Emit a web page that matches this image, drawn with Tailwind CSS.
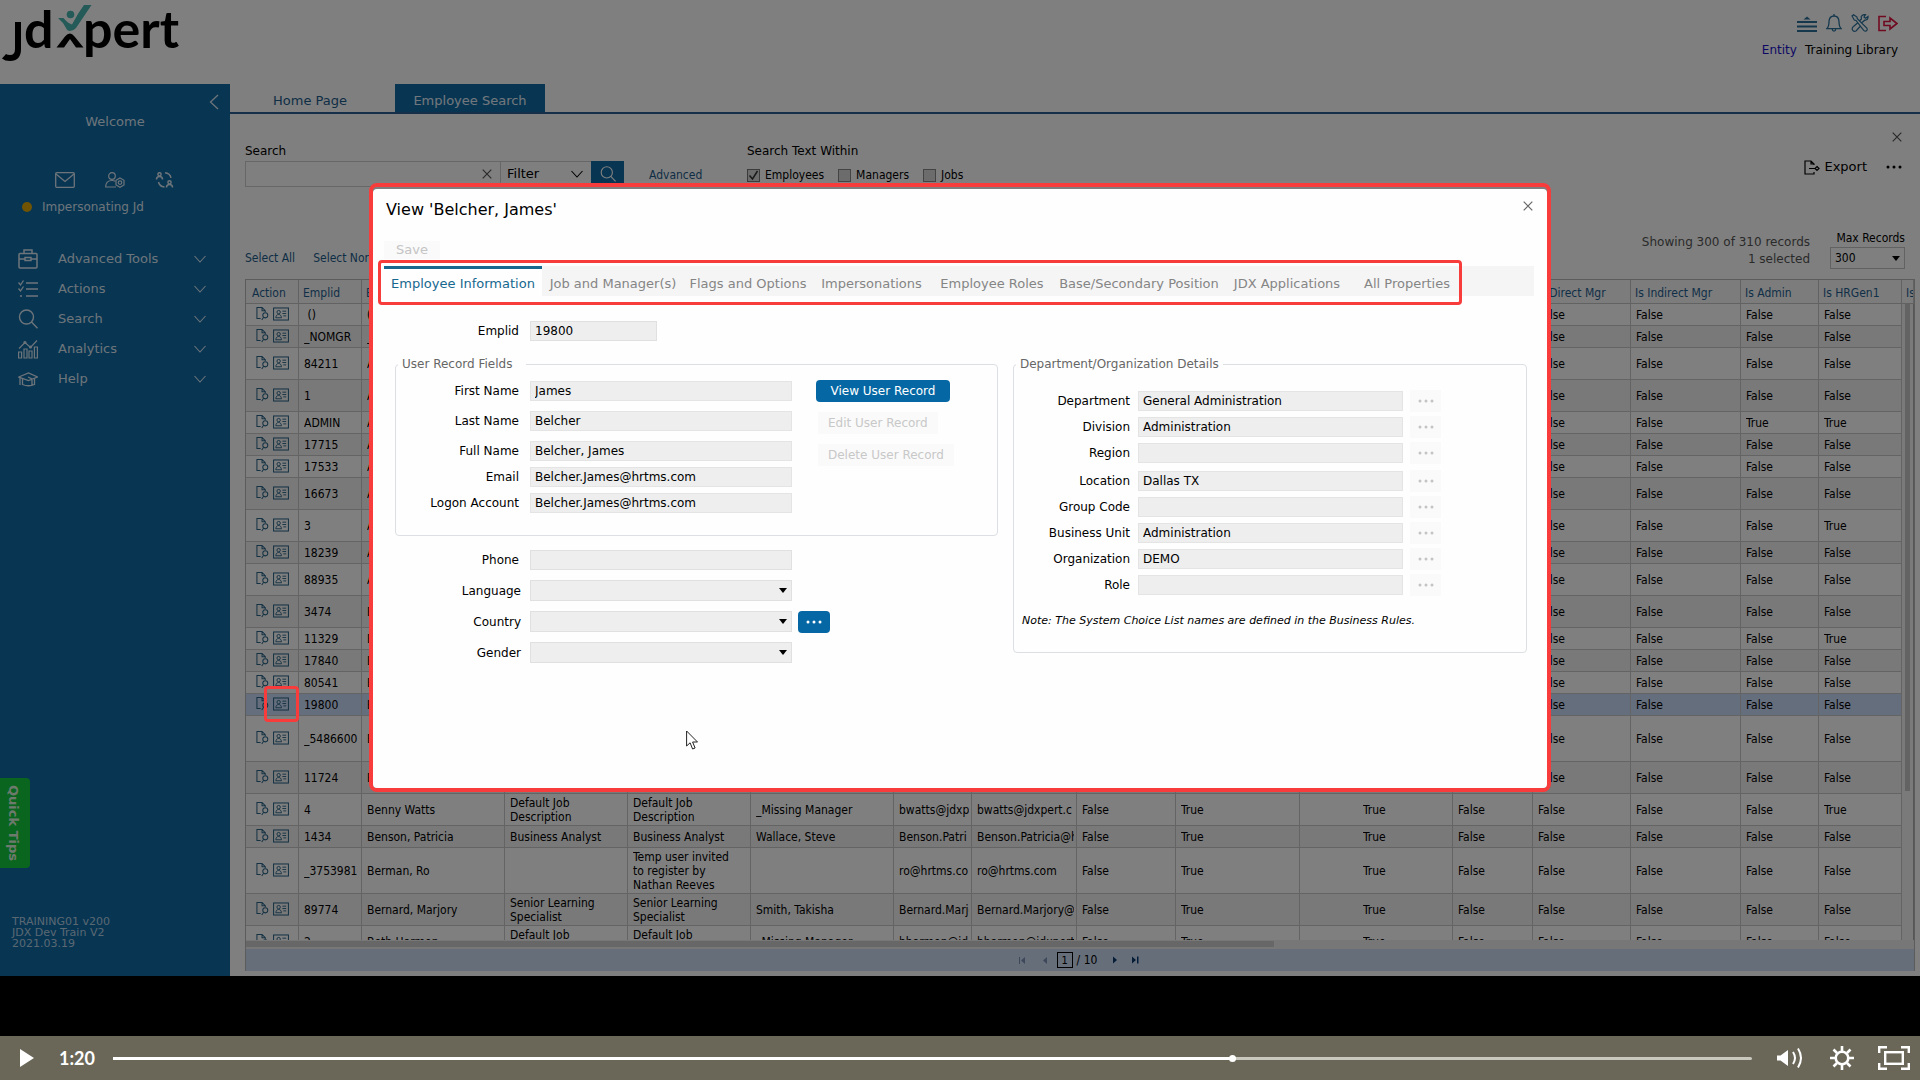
<!DOCTYPE html>
<html lang="en">
<head>
<meta charset="utf-8">
<title>JDXpert - Employee Search</title>
<script src="https://cdn.jsdelivr.net/npm/@tailwindcss/browser@4"></script>
</head>
<body class="flex h-screen flex-col overflow-hidden bg-black font-['DejaVu_Sans',Verdana,sans-serif] text-xs text-black">

<!-- Shared icon symbols -->
<svg class="hidden" aria-hidden="true">
  <symbol id="chev" viewBox="0 0 12 8"><path d="M.5 1 6 7l5.500-6" fill="none" stroke="currentColor" stroke-width="1.100"/></symbol>
  <symbol id="cross" viewBox="0 0 10 10"><path d="m.7.7 8.600 8.600M9.300.7.7 9.300" fill="none" stroke="currentColor" stroke-width="1.200"/></symbol>
  <symbol id="lens" viewBox="0 0 20 20"><g fill="none" stroke="currentColor" stroke-width="1.400"><circle cx="8.500" cy="8" r="7"/><path d="m13.500 13 6 6.300"/></g></symbol>
  <symbol id="doc" viewBox="0 0 14 15"><g fill="none" stroke="currentColor" stroke-width="1.100"><path d="M5 13H1V1h5.500l3.500 3.500V6M6.500 1v3.500H10"/><circle cx="10" cy="9.500" r="2.700"/><path d="m8.200 11.500-2 3"/></g></symbol>
  <symbol id="card" viewBox="0 0 17 14"><g fill="none" stroke="currentColor"><rect x=".6" y=".6" width="15.800" height="12.800" stroke-width="1.100"/><circle cx="6" cy="5" r="1.800"/><path d="M3 11c.2-2.300 1.200-3.500 3-3.500S8.800 8.700 9 11zM10 4h4M10 6.500h4M11 9h3"/></g></symbol>
  <symbol id="dots" viewBox="0 0 18 4"><g fill="currentColor"><circle cx="3" cy="2" r="1.500"/><circle cx="9" cy="2" r="1.500"/><circle cx="15" cy="2" r="1.500"/></g></symbol>
  <symbol id="tri" viewBox="0 0 8 5"><path d="M0 0h8L4 5z" fill="currentColor"/></symbol>
</svg>

<main class="relative flex min-h-0 flex-1 flex-col overflow-hidden bg-white">
  <header class="flex h-[84px] shrink-0 justify-between">
    <svg class="h-16 w-48" viewBox="0 0 192 64" role="img" aria-label="jdxpert">
      <g font-family="Lato, sans-serif" font-weight="700" font-size="52" fill="#000">
        <text x="24" y="47.500">d</text><text x="83" y="47.500">pert</text>
      </g>
      <path d="M18 22v27q0 9-8 9-4 0-6-1.800" stroke="#000" stroke-width="6" fill="none"/>
      <path d="m56.500 47.500 8.500-11q5-6 9.500 0l9 11h-7.500L70 39l-6 8.500z" fill="#000"/>
      <path d="M58 18h5.500q4 5 8.500 6.500Q78 13 84 5h7.500L76 28q-2.500 3-6 3-3 0-4-3Q63 22 58 18z" fill="#48b4b0"/><circle cx="70.500" cy="14.500" r="3.800" fill="#48b4b0"/>
    </svg>
    <div class="flex flex-col items-end gap-2 pt-[14px] pr-[22px]">
      <div class="flex items-center gap-[9px] text-[#2a7099]">
        <svg class="h-[18px] w-5" viewBox="0 0 20 18"><path d="M0 8h20M0 12.500h20M0 17h20" stroke="currentColor" stroke-width="1.800"/><path d="m6.500 5.500 3.500-3 3.500 3z" fill="currentColor"/></svg>
        <svg class="h-[18px] w-4" viewBox="0 0 16 18" fill="none" stroke="currentColor" stroke-width="1.300"><path d="M.7 14.700Q3 13 3 7.500 3.300 2 8 2t5 5.500q0 5.500 2.300 7.200zM8 0v2M6.200 15q.3 2.200 1.800 2.200T9.800 15"/></svg>
        <svg class="h-[18px] w-[18px]" viewBox="0 0 18 18" fill="none" stroke="currentColor" stroke-width="1.200"><path d="m1 2 1.500-1.300L6 3l.3 1.700 9.500 9.300q1 2-.5 3-1.500.4-2.600-.7L5 6.500 3.300 6zM11 8.500l3-2.500q2.500.3 3-2.200V2.500l-2.300 1.800L13 3l1.500-2.300q-3-.6-4.300 1.800l.2 2.500-2 2M6.500 9l-4 3.500Q.5 14 1.500 16t3.500 1l4.500-5"/></svg>
        <svg class="h-[18px] w-5 text-[#e01440]" viewBox="0 0 20 18" fill="none" stroke="currentColor" stroke-width="1.600"><path d="M8 2.500H1v14h7M6 7.500h6V4l7 5.500-7 5.500v-3.500H6z"/></svg>
      </div>
      <div class="flex gap-2 text-xs leading-5"><a href="#" class="text-[#1a10c8]">Entity</a><span>Training Library</span></div>
    </div>
  </header>

  <div class="flex min-h-0 flex-1">
    <!-- Side navigation -->
    <aside class="flex w-[230px] shrink-0 flex-col bg-[#0f6aa4] text-[13px] text-[#dbe9f5]">
      <button aria-label="Collapse" class="mt-[10px] mr-[11px] self-end"><svg class="h-4 w-[10px]" viewBox="0 0 10 16"><path d="M9 1 1.500 8 9 15" fill="none" stroke="currentColor" stroke-width="1.300"/></svg></button>
      <p class="mt-px text-center leading-[22px]">Welcome</p>
      <div class="mt-[39px] flex justify-center gap-[30px]">
        <svg class="h-4 w-5" viewBox="0 0 20 16" fill="none" stroke="currentColor" stroke-width="1.300"><rect x=".7" y=".7" width="18.600" height="14.600" rx="1"/><path d="m1 2 9 7.500L19 2"/></svg>
        <svg class="h-4 w-5" viewBox="0 0 20 16" fill="none" stroke="currentColor" stroke-width="1.200"><circle cx="7" cy="4" r="3.300"/><path d="M11 15H.7q0-6.500 6.300-6.500 2 0 3.300.7"/><path d="m15 6 4 2.300v4.700l-4 2.300-4-2.300V8.300z"/><circle cx="15" cy="10.600" r="1.800"/></svg>
        <svg class="h-4 w-5" viewBox="0 0 20 16" fill="none" stroke="currentColor" stroke-width="1.500"><circle cx="4.500" cy="2.300" r="1.600"/><path d="M1.500 7.500q0-3 3-3t3 3M10 .8q5 .5 6 5M9.500 15q-5-.5-6-5"/><circle cx="14.500" cy="10.300" r="1.600"/><path d="M11.500 15.500q0-3 3-3t3 3"/></svg>
      </div>
      <p class="mt-[10px] flex items-center gap-[10px] pl-[22px] text-xs leading-[18px]"><span class="h-[10px] w-[10px] rounded-full bg-[#e0a808]"></span>Impersonating Jd</p>
      <nav class="mt-7 flex flex-col pr-6 pl-[18px]">
        <a href="#" class="flex h-[30px] items-center gap-5"><svg class="h-5 w-5" viewBox="0 0 20 20" fill="none" stroke="currentColor" stroke-width="1.500"><rect x="1" y="4.500" width="18" height="14.500" rx="1"/><path d="M6 4V1h8v3M1 10h6m6 0h6M7 8.500h6v3H7z"/></svg><span class="flex-1">Advanced Tools</span><svg class="h-2 w-3"><use href="#chev"/></svg></a>
        <a href="#" class="flex h-[30px] items-center gap-5"><svg class="h-5 w-5" viewBox="0 0 20 20" fill="none" stroke="currentColor" stroke-width="1.300"><path d="M8 4h12M8 10h12M8 17h12M.5 3.500 2.500 6 5.500 1.500M.5 9.500 2.500 12l3-4.500M2 17h2"/></svg><span class="flex-1">Actions</span><svg class="h-2 w-3"><use href="#chev"/></svg></a>
        <a href="#" class="flex h-[30px] items-center gap-5"><svg class="h-5 w-5"><use href="#lens"/></svg><span class="flex-1">Search</span><svg class="h-2 w-3"><use href="#chev"/></svg></a>
        <a href="#" class="flex h-[30px] items-center gap-5"><svg class="h-5 w-5" viewBox="0 0 20 20" fill="none" stroke="currentColor" stroke-width="1.200"><path d="M.6 19v-6h3v6zM6 19v-9h3v9zM11 19v-7h3v7zM16.400 19V8h3v11zM1 9.500l6-6 5.500 5L19 1.500"/><circle cx="7" cy="3.500" r="1"/><circle cx="12.500" cy="8" r="1"/></svg><span class="flex-1">Analytics</span><svg class="h-2 w-3"><use href="#chev"/></svg></a>
        <a href="#" class="flex h-[30px] items-center gap-5"><svg class="h-5 w-5" viewBox="0 0 20 20" fill="none" stroke="currentColor" stroke-width="1.300"><path d="m.8 8 9.700-4L19.500 8l-9 3.500zM4.500 10v5.500q6 2.500 12 0V10M2 9v7M10 8l4 2v6"/></svg><span class="flex-1">Help</span><svg class="h-2 w-3"><use href="#chev"/></svg></a>
      </nav>
      <p class="mt-auto pb-[27px] pl-3 text-[11px] leading-[11px] text-[#b4d0e4]">TRAINING01 v200<br>JDX Dev Train V2<br>2021.03.19</p>
    </aside>

    <section class="flex min-w-0 flex-1 flex-col">
      <div class="flex h-[30px] shrink-0 items-end border-b-2 border-[#2a5f96] text-[13px]" role="tablist">
        <button role="tab" class="h-[26px] w-[160px] pt-1 text-[#1d5c8c]">Home Page</button>
        <button role="tab" aria-selected="true" class="ml-[5px] h-[28px] w-[150px] bg-[#0f6aa4] pt-[6px] text-[#e4effa]">Employee Search</button>
      </div>

      <div class="flex justify-between pt-[28px] pr-[15px] pl-[15px]">
        <div class="flex">
          <div class="flex flex-col">
            <label for="q" class="h-[19px] leading-[18px]">Search</label>
            <div class="flex h-[26px]">
              <div class="flex w-[256px] items-center border border-[#cfcfcf] pr-2"><input id="q" type="text" class="min-w-0 flex-1 outline-none"><svg class="h-[10px] w-[10px] text-[#555]"><use href="#cross"/></svg></div>
              <div class="relative"><select aria-label="Filter" class="h-[26px] w-[90px] appearance-none border-y border-[#cfcfcf] pl-[6px] text-[13px]"><option>Filter</option></select><svg class="pointer-events-none absolute top-[9px] right-2 h-2 w-3"><use href="#chev"/></svg></div>
              <button aria-label="Run search" class="flex w-[33px] items-center justify-center bg-[#0f6aa4] text-white"><svg class="h-4 w-4"><use href="#lens"/></svg></button>
              <a href="#" class="ml-[25px] w-14 self-center pt-[2px] font-['DejaVu_Sans_Condensed','DejaVu_Sans',sans-serif] text-[#1d5c8c]">Advanced</a>
            </div>
          </div>
          <fieldset class="ml-[42px] font-['DejaVu_Sans_Condensed','DejaVu_Sans',sans-serif]">
            <legend class="h-[19px] font-['DejaVu_Sans',sans-serif] leading-[18px]">Search Text Within</legend>
            <div class="flex h-[26px] items-center gap-[14px] pt-[2px]">
              <label class="flex items-center gap-[5px]"><span class="relative h-[13px] w-[13px]"><input type="checkbox" checked class="block h-[13px] w-[13px] appearance-none border border-[#777] bg-[#d8d8d8]"><svg class="pointer-events-none absolute inset-0 h-[13px] w-[13px]" viewBox="0 0 13 13"><path d="m2.500 6.500 3 3.500 5-8" fill="none" stroke="#333" stroke-width="1.500"/></svg></span>Employees</label>
              <label class="flex items-center gap-[5px]"><input type="checkbox" class="h-[13px] w-[13px] appearance-none border border-[#888] bg-[#d8d8d8]">Managers</label>
              <label class="flex items-center gap-[5px]"><input type="checkbox" class="h-[13px] w-[13px] appearance-none border border-[#888] bg-[#d8d8d8]">Jobs</label>
            </div>
          </fieldset>
        </div>
        <div class="-mt-[10px] flex flex-col items-end gap-[15px]">
          <button aria-label="Close page" class="mr-[3px]"><svg class="h-[10px] w-[10px] text-[#555]"><use href="#cross"/></svg></button>
          <div class="flex items-center gap-[18px] pr-[2px]">
            <button class="flex items-center gap-1 text-[13px] leading-5"><svg class="h-[15px] w-4" viewBox="0 0 16 15" fill="none" stroke="currentColor" stroke-width="1.200"><path d="M10 5V4L7 1H1v13h9v-2M7 1v3h3M5 8.500h6M13 6.500l2 2-2 2-2-2z"/></svg>Export</button>
            <button aria-label="More"><svg class="h-1 w-[18px]"><use href="#dots"/></svg></button>
          </div>
        </div>
      </div>

      <div class="mt-[43px] flex h-[49px] shrink-0 justify-between pr-[15px] pl-[15px]">
        <div class="flex gap-[18px] pt-[18px] font-['DejaVu_Sans_Condensed','DejaVu_Sans',sans-serif] leading-5 text-[#1d5c8c]"><a href="#">Select All</a><a href="#">Select None</a></div>
        <div class="flex gap-5">
          <p class="pt-1 text-right leading-[17px] text-[#555]">Showing 300 of 310 records<br>1 selected</p>
          <div class="relative w-[75px] font-['DejaVu_Sans_Condensed','DejaVu_Sans',sans-serif]">
            <label for="max" class="block h-[17px] text-right leading-[17px] whitespace-nowrap">Max Records</label>
            <select id="max" class="h-[22px] w-[75px] appearance-none border border-[#c4c4c4] pl-1"><option>300</option></select>
            <svg class="pointer-events-none absolute top-[26px] right-[5px] h-[5px] w-2"><use href="#tri"/></svg>
          </div>
        </div>
      </div>

      <div class="relative mr-[5px] ml-[15px] min-h-0 flex-1 overflow-hidden border border-b-0 border-[#b8b8b8] font-['DejaVu_Sans_Condensed','DejaVu_Sans',Tahoma,sans-serif]">
        <table class="w-full table-fixed border-separate border-spacing-0 text-xs leading-[14px]">
          <colgroup>
            <col class="w-[53px]"><col class="w-[63px]"><col class="w-[143px]"><col class="w-[123px]"><col class="w-[123px]"><col class="w-[143px]"><col class="w-[78px]"><col class="w-[105px]"><col class="w-[99px]"><col class="w-[124px]"><col class="w-[153px]"><col class="w-[80px]"><col class="w-[98px]"><col class="w-[110px]"><col class="w-[78px]"><col class="w-[83px]"><col>
          </colgroup>
          <thead class="bg-[#f8f8f8] text-left text-[#1f5f90]"><tr id="head" class="h-[24px]"></tr></thead>
          <tbody id="rows"></tbody>
        </table>
        <div class="absolute top-[24px] right-0 bottom-0 w-3 border-r border-[#aaa] bg-[#f4f4f4] px-[3px]"><div class="h-[487px] bg-[#c6c6c6]"></div></div>
      </div>
      <div class="mr-[5px] mb-[5px] ml-[15px] shrink-0 border-x border-[#b8b8b8]">
        <div class="h-[9px] bg-[#eee] pt-px"><div class="h-[6px] w-[1028px] max-w-full bg-[#cfcfcf]"></div></div>
        <div class="flex h-[22px] items-center justify-center bg-[#ccdcf4] pr-[2px] font-['DejaVu_Sans_Condensed','DejaVu_Sans',sans-serif] text-xs">
          <button aria-label="First page" class="mr-4 text-[#7a93b5]"><svg class="h-[7px] w-[7px]" viewBox="0 0 7 7"><path d="M0 0h1v7H0zM6 0v7L2 3.500z" fill="currentColor"/></svg></button>
          <button aria-label="Previous page" class="mr-[10px] text-[#7a93b5]"><svg class="h-[7px] w-[5px]" viewBox="0 0 5 7"><path d="M5 0v7L1 3.500z" fill="currentColor"/></svg></button>
          <input aria-label="Page" value="1" class="mr-1 h-4 w-4 border border-black text-center text-[11px]">
          <span>/ 10</span>
          <button aria-label="Next page" class="ml-4 text-[#0d3a70]"><svg class="h-[8px] w-[5px]" viewBox="0 0 5 7"><path d="M0 0v7l4-3.500z" fill="currentColor"/></svg></button>
          <button aria-label="Last page" class="ml-[14px] text-[#0d3a70]"><svg class="h-[8px] w-[7px]" viewBox="0 0 7 7"><path d="M0 0v7l4-3.500zM5 0h1.500v7H5z" fill="currentColor"/></svg></button>
        </div>
      </div>
    </section>
  </div>

  <button class="absolute top-[778px] left-0 flex h-[90px] w-[30px] items-center justify-center rounded-r bg-[#14cc3c] pr-[3px] text-[13px] font-bold text-[#dcf4dc] [writing-mode:vertical-rl]">Quick Tips</button>

  <!-- Backdrop and record dialog -->
  <div class="absolute inset-0 flex items-start justify-center bg-black/50 pt-[183px]">
    <div class="relative w-[1182px] rounded-lg border-4 border-[#f83c3c] pt-[2px]">
      <div role="dialog" aria-label="View record" class="flex h-[599px] flex-col rounded bg-[#fefefe] pl-[11px]">
        <div class="flex items-start justify-between pt-[10px] pr-[14px]">
          <h1 class="pl-[2px] text-base leading-[22px]">View 'Belcher, James'</h1>
          <button aria-label="Close" class="mt-[2px]"><svg class="h-[10px] w-[10px] text-[#666]"><use href="#cross"/></svg></button>
        </div>
        <button disabled class="mt-5 h-[18px] w-[56px] self-start bg-[#fafafa] text-center text-[13px] leading-[18px] text-[#c4c4c4]">Save</button>
        <div role="tablist" class="mt-[7px] mr-[13px] flex h-[30px] bg-[#f5f5f5] text-[13px] text-[#858585]">
          <button role="tab" aria-selected="true" class="w-[158px] border-t-[3px] border-[#17688f] bg-[#fefefe] pt-[2px] text-[#17688f]">Employee Information</button>
          <button role="tab" class="w-[142px] pt-[5px] whitespace-nowrap">Job and Manager(s)</button>
          <button role="tab" class="w-[128px] pt-[5px] whitespace-nowrap">Flags and Options</button>
          <button role="tab" class="w-[119px] pt-[5px] whitespace-nowrap">Impersonations</button>
          <button role="tab" class="w-[122px] pt-[5px] whitespace-nowrap">Employee Roles</button>
          <button role="tab" class="w-[172px] pt-[5px] whitespace-nowrap">Base/Secondary Position</button>
          <button role="tab" class="w-[124px] pt-[5px] whitespace-nowrap">JDX Applications</button>
          <button role="tab" class="w-[116px] pt-[5px] whitespace-nowrap">All Properties</button>
        </div>

        <div class="mt-[25px] flex h-5 items-center gap-[11px] pl-3"><label for="emplid" class="w-[123px] text-right">Emplid</label><input id="emplid" readonly value="19800" class="h-5 w-[127px] border border-[#e0e0e0] bg-[#eeeeee] px-1"></div>

        <div class="mt-[15px] flex items-start gap-[15px] pr-[20px] pl-[11px]">
          <div class="w-[603px]">
            <fieldset class="h-[180px] rounded border border-[#dcdfe3]">
              <legend class="ml-[2px] h-4 w-[128px] px-1 leading-4 text-[#666]">User Record Fields</legend>
              <div class="mt-[9px] flex gap-6">
                <div id="userFields" class="flex flex-col"></div>
                <div class="-mt-px flex flex-col items-start gap-[10px]">
                  <button class="h-[22px] w-[134px] rounded-sm bg-[#0568a5] text-white">View User Record</button>
                  <button disabled class="ml-[2px] h-[22px] bg-[#fafafa] px-[10px] text-[#c8c8c8]">Edit User Record</button>
                  <button disabled class="ml-[2px] h-[22px] bg-[#fafafa] px-[10px] text-[#c8c8c8]">Delete User Record</button>
                </div>
              </div>
            </fieldset>
            <div class="mt-[14px] flex flex-col gap-[10px] pl-px">
              <div class="flex h-5 items-center gap-[11px]"><label for="phone" class="w-[123px] text-right">Phone</label><input id="phone" readonly class="h-5 w-[262px] border border-[#e0e0e0] bg-[#eeeeee] px-1"></div>
              <div class="flex h-[21px] items-center gap-[9px]"><label for="language" class="w-[125px] text-right">Language</label><div class="relative"><select id="language" class="block h-[21px] w-[262px] appearance-none border border-[#e0e0e0] bg-[#eeeeee]"></select><svg class="pointer-events-none absolute top-2 right-[5px] h-[5px] w-2"><use href="#tri"/></svg></div></div>
              <div class="flex h-[21px] items-center gap-[9px]"><label for="country" class="w-[125px] text-right">Country</label><div class="relative"><select id="country" class="block h-[21px] w-[262px] appearance-none border border-[#e0e0e0] bg-[#eeeeee]"></select><svg class="pointer-events-none absolute top-2 right-[5px] h-[5px] w-2"><use href="#tri"/></svg></div><button aria-label="Pick country" class="-ml-[3px] flex h-[22px] w-8 items-center justify-center rounded-sm bg-[#0568a5] text-white"><svg class="h-1 w-[18px]"><use href="#dots"/></svg></button></div>
              <div class="flex h-[21px] items-center gap-[9px]"><label for="gender" class="w-[125px] text-right">Gender</label><div class="relative"><select id="gender" class="block h-[21px] w-[262px] appearance-none border border-[#e0e0e0] bg-[#eeeeee]"></select><svg class="pointer-events-none absolute top-2 right-[5px] h-[5px] w-2"><use href="#tri"/></svg></div></div>
            </div>
          </div>
          <fieldset class="h-[297px] flex-1 rounded border border-[#dcdfe3]">
            <legend class="ml-[2px] h-4 px-1 leading-4 text-[#666]">Department/Organization Details</legend>
            <div id="orgFields" class="mt-[19px] flex flex-col"></div>
            <p class="mt-4 pl-2 text-[11px] leading-5 italic">Note: The System Choice List names are defined in the Business Rules.</p>
          </fieldset>
        </div>
      </div>

      <!-- Callout round the tab strip, and the mouse pointer -->
      <div class="pointer-events-none absolute top-[73px] left-[5px] h-[45px] w-[1084px] rounded border-[3px] border-[#f83c3c]"></div>
      <svg class="pointer-events-none absolute top-[543px] left-[313px] h-5 w-[13px]" viewBox="0 0 13 20"><path d="M.6 1v15l3.500-3.200L6.600 19l2.500-1-2.500-6H11.500z" fill="#fff" stroke="#222"/></svg>
    </div>
    <div class="pointer-events-none absolute top-[686px] left-[264px] h-[36px] w-[35px] rounded border-[3px] border-[#f83c3c]"></div>
  </div>
</main>

<div class="h-[60px] shrink-0 bg-black"></div>

<!-- Video player controls -->
<footer class="flex h-[44px] shrink-0 items-center bg-[#6a6758] pr-[10px] pl-5 text-white">
  <button aria-label="Play"><svg class="h-[18px] w-[14px]" viewBox="0 0 14 18"><path d="M0 0v18L14 9z" fill="currentColor"/></svg></button>
  <span class="w-[79px] pl-[25px] font-[Lato,sans-serif] text-lg font-bold">1:20</span>
  <div class="relative h-[3px] flex-1 rounded bg-[#c9c8bf]"><div class="h-full bg-white" style="width:68.300%"></div><span class="absolute -top-[2px] h-[7px] w-[7px] rounded-full bg-white" style="left:68.100%"></span></div>
  <button aria-label="Volume" class="ml-[25px]"><svg class="h-[22px] w-[26px]" viewBox="0 0 26 22"><path d="M0 8.500h3.500L11 3v16l-7.500-5.500H0z" fill="currentColor"/><path d="M16 5q4 6 0 12M21 1.500q6 9.500 0 19" fill="none" stroke="currentColor" stroke-width="2"/></svg></button>
  <button aria-label="Settings" class="ml-[27px]"><svg class="h-6 w-6" viewBox="0 0 24 24" fill="none" stroke="currentColor"><circle cx="12" cy="12" r="6.300" stroke-width="2.600"/><path d="M12 0v5M12 19v5M0 12h5M19 12h5M3.500 3.500 7 7M17 17l3.500 3.500M3.500 20.500 7 17M17 7l3.500-3.500" stroke-width="2.600"/></svg></button>
  <button aria-label="Full screen" class="ml-[24px]"><svg class="h-6 w-8" viewBox="0 0 32 24" fill="none" stroke="currentColor" stroke-width="2.400"><path d="M1.200 7V1.200H9M23 1.200h7.800V7M30.800 17v5.800H23M9 22.800H1.200V17"/><rect x="7.200" y="6.200" width="17.600" height="11.600"/></svg></button>
</footer>

<script>
const F = 'False', T = 'True';
document.getElementById('head').innerHTML = ['Action','Emplid','E','','','','','','','','','','Is Direct Mgr','Is Indirect Mgr','Is Admin','Is HRGen1','Is']
  .map((h, i) => `<th class="overflow-hidden border-r border-b border-[#c4c4c4] p-0 ${i ? 'pl-1' : 'pl-[6px]'} pt-[2px] font-normal whitespace-nowrap">${h}</th>`).join('');

// [row height class, id, name, title, job, manager, logon, email, flag, flag, flag, is admin, is HRGen1]
const rows = [
  ['h-[22px]','&nbsp;()','(',,,,,,,,,F,F],
  ['h-[22px]','_NOMGR','_',,,,,,,,,F,F],
  ['h-8','84211','A',,,,,,,,,F,F],
  ['h-8','1','A',,,,,,,,,F,F],
  ['h-[22px]','ADMIN','A',,,,,,,,,T,T],
  ['h-[22px]','17715','A',,,,,,,,,F,F],
  ['h-[22px]','17533','A',,,,,,,,,F,F],
  ['h-8','16673','A',,,,,,,,,F,F],
  ['h-8','3','A',,,,,,,,,F,T],
  ['h-[22px]','18239','A',,,,,,,,,F,F],
  ['h-8','88935','A',,,,,,,,,F,F],
  ['h-8','3474','B',,,,,,,,,F,F],
  ['h-[22px]','11329','B',,,,,,,,,F,T],
  ['h-[22px]','17840','B',,,,,,,,,F,F],
  ['h-[22px]','80541','B',,,,,,,,,F,F],
  ['h-[22px]','19800','B',,,,,,,,,F,F],
  ['h-[46px]','_5486600','B',,,,,,,,,F,F],
  ['h-8','11724','B','<br>Desk','<br>Desk',,,,,,,F,F],
  ['h-8','4','Benny Watts','Default Job<br>Description','Default Job<br>Description','_Missing Manager','bwatts@jdxp','bwatts@jdxpert.c',F,T,T,F,T],
  ['h-[22px]','1434','Benson, Patricia','Business Analyst','Business Analyst','Wallace, Steve','Benson.Patri','Benson.Patricia@h',F,T,T,F,F],
  ['h-[46px]','_3753981','Berman, Ro','','Temp user invited<br>to register by<br>Nathan Reeves','','ro@hrtms.co','ro@hrtms.com',F,T,T,F,F],
  ['h-8','89774','Bernard, Marjory','Senior Learning<br>Specialist','Senior Learning<br>Specialist','Smith, Takisha','Bernard.Marjo','Bernard.Marjory@',F,T,T,F,F],
  ['h-8','2','Beth Harmon','Default Job<br>Description','Default Job<br>Description','_Missing Manager','bharmon@jd','bharmon@jdxpert',F,T,T,F,F],
];
const cell = (v, pad) => `<td class="border-r border-b border-[#c8c8c8] p-0 ${pad}"><div class="overflow-hidden whitespace-nowrap">${v || ''}</div></td>`;
document.getElementById('rows').innerHTML = rows.map((r, i) => {
  const tone = r[1] === '19800' ? 'bg-[#cadcf8]' : i % 2 ? 'bg-[#f2f2f2]' : 'bg-white';
  const icons = '<span class="flex items-center gap-1 pb-[2px] pl-[10px] text-[#2a6488]"><svg class="h-[15px] w-[13px]"><use href="#doc"/></svg><svg class="h-[14px] w-[16px]"><use href="#card"/></svg></span>';
  const p = 'pl-[5px] pr-[2px]';
  return `<tr class="${r[0]} ${tone}">` + cell(icons, 'pl-0') + [1,2,3,4,5,6,7,8,9].map(k => cell(r[k], p)).join('')
    + cell(r[10], 'pl-[63px]') + cell(i > 17 ? F : '', p) + cell(F, p) + cell(F, p) + cell(r[11], p) + cell(r[12], p) + cell('', p) + '</tr>';
}).join('');

document.getElementById('userFields').innerHTML = [
  ['First Name','James','mt-0'],['Last Name','Belcher','mt-[10px]'],['Full Name','Belcher, James','mt-[10px]'],
  ['Email','Belcher.James@hrtms.com','mt-[6px]'],['Logon Account','Belcher.James@hrtms.com','mt-[6px]'],
].map(([l, v, m], i) => `<div class="${m} flex h-5 items-center gap-[11px]"><label for="u${i}" class="w-[123px] text-right">${l}</label><input id="u${i}" readonly value="${v}" class="h-5 w-[262px] border border-[#e4e4e4] bg-[#eeeeee] px-1"></div>`).join('');

document.getElementById('orgFields').innerHTML = [
  ['Department','General Administration','mt-0'],['Division','Administration','mt-[6px]'],['Region','','mt-[6px]'],['Location','Dallas TX','mt-2'],
  ['Group Code','','mt-[6px]'],['Business Unit','Administration','mt-[6px]'],['Organization','DEMO','mt-[6px]'],['Role','','mt-[6px]'],
].map(([l, v, m], i) => `<div class="${m} flex h-5 items-center"><label for="o${i}" class="w-[116px] text-right">${l}</label><input id="o${i}" readonly value="${v}" class="ml-2 h-5 w-[265px] border border-[#e4e4e4] bg-[#eeeeee] px-1"><button disabled aria-label="Pick ${l}" class="ml-[7px] flex h-[22px] w-[31px] items-center justify-center bg-[#fafafa] text-[#c4c4c4]"><svg class="h-1 w-[18px]"><use href="#dots"/></svg></button></div>`).join('');
</script>
</body>
</html>
